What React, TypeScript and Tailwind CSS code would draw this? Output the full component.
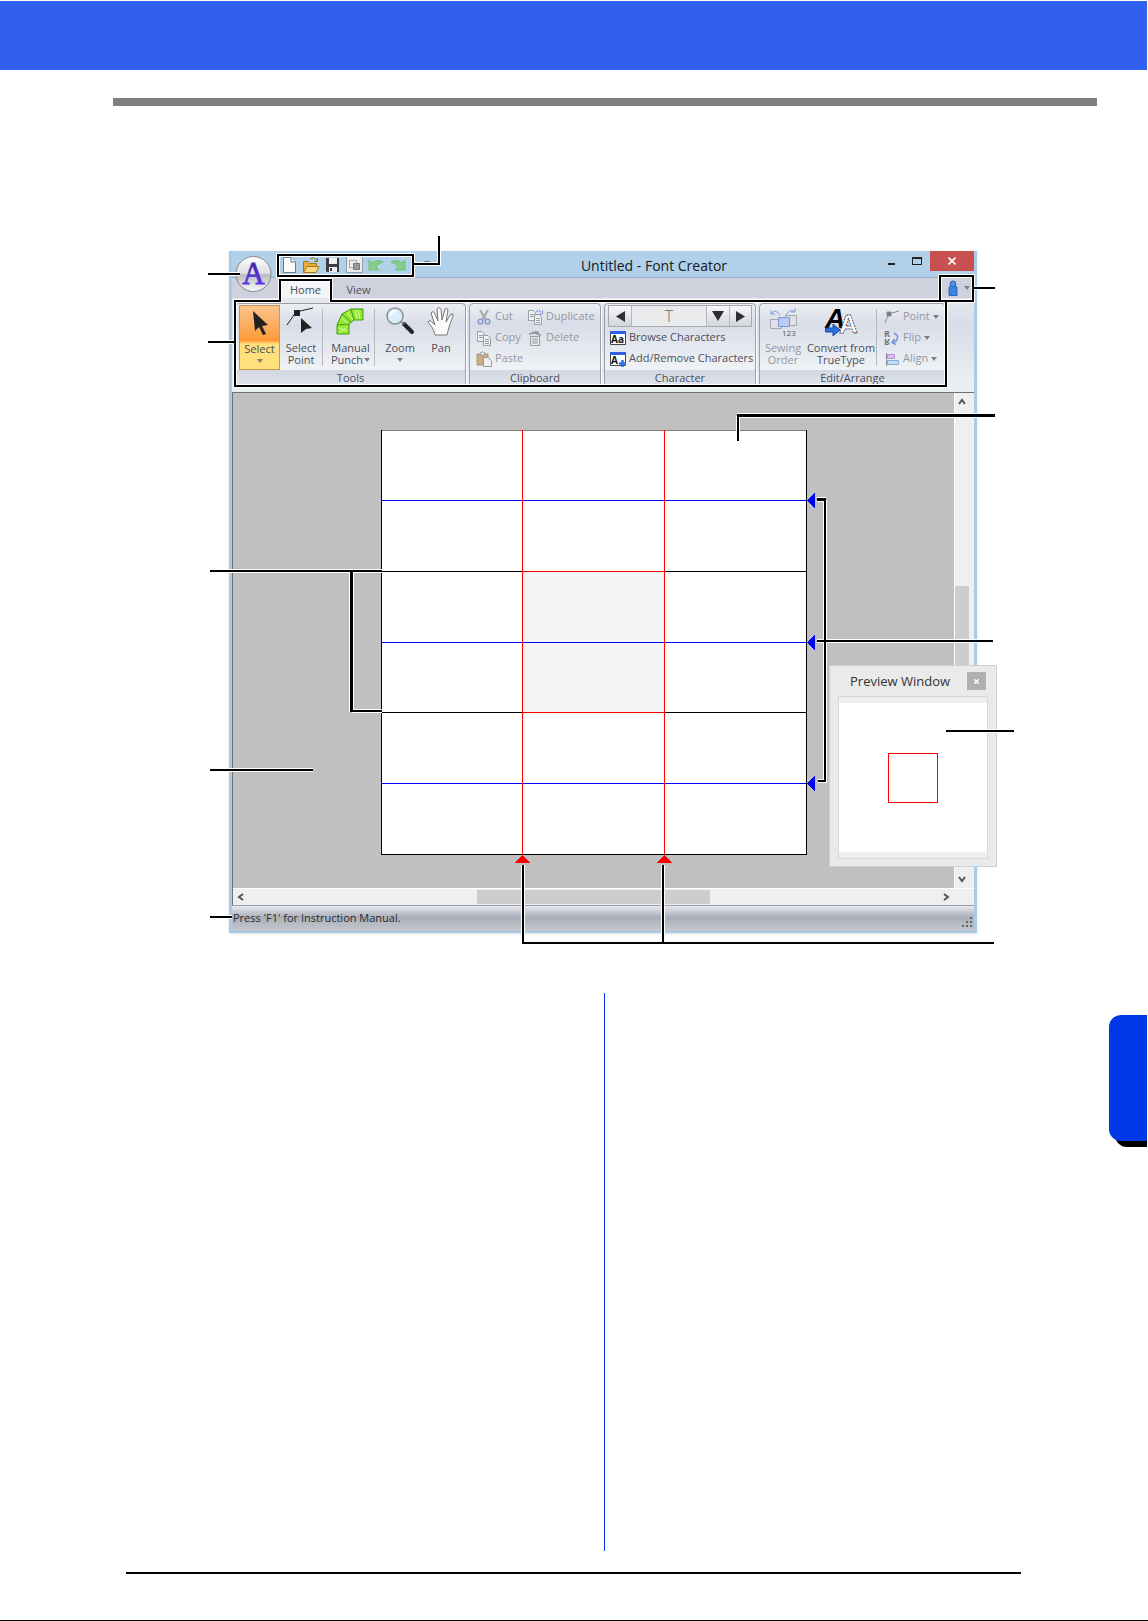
import type { ReactNode } from "react";

const Caret = () => (
  <svg width="6" height="4" viewBox="0 0 6 4" className="shrink-0">
    <path d="M0 0H6L3 4Z" fill="#808080" />
  </svg>
);

const Group = ({ label, className, children }: { label: string; className: string; children: ReactNode }) => (
  <section
    className={`${className} flex shrink-0 flex-col rounded-sm border border-[#9c9fa8] bg-linear-to-b from-[#eceef3] from-0% via-[#d9dde8] via-25% to-[#eff3f5] to-80% shadow-[1px_1px_0_#fff]`}
  >
    <div className="flex h-[66px] pt-px">{children}</div>
    <h2 className="h-4 bg-linear-to-b from-[#d3d7e2] to-[#e0e4ec] text-center leading-4 text-[#4a4e5a]">{label}</h2>
  </section>
);

const BigButton = ({
  className,
  icon,
  lines,
  menu,
}: {
  className: string;
  icon: ReactNode;
  lines: string[];
  menu?: boolean;
}) => (
  <button className={`${className} flex shrink-0 flex-col items-center whitespace-nowrap pt-px leading-3`}>
    <svg width="32" height="32" viewBox="0 0 32 32" className="mb-1 shrink-0 overflow-visible">
      {icon}
    </svg>
    {lines.map((line, i) => (
      <span key={line} className="flex items-center gap-px">
        {line}
        {menu && i === 1 && <Caret />}
      </span>
    ))}
    {menu && lines.length === 1 && (
      <span className="flex h-3 items-center">
        <Caret />
      </span>
    )}
  </button>
);

const SmallButton = ({ icon, label, menu }: { icon: ReactNode; label: string; menu?: boolean }) => (
  <button className="flex h-[21px] items-center gap-[3px] whitespace-nowrap">
    <svg width="16" height="16" viewBox="0 0 16 16" className="shrink-0 overflow-visible">
      {icon}
    </svg>
    {label}
    {menu && <Caret />}
  </button>
);

const Separator = () => <div className="my-1 w-px shrink-0 bg-[#b5b8c2]" />;

/* Small icons, 16x16 */
const pages = (
  <g fill="#eef0f3" stroke="#9a9da4">
    <path d="M1.500 1.500H6L8.500 4V11.500H1.500Z" />
    <path d="M3 5.500H7M3 7.500H7" />
    <path d="M7.500 5.500H12L14.500 8V15.500H7.500Z" />
    <path d="M9 9.500H13M9 11.500H13M9 13.500H13" />
  </g>
);

const icons = {
  cut: (
    <g fill="none">
      <path d="M4 1L10 11M12 1L6 11" stroke="#a6a8ae" strokeWidth="2" />
      <circle cx="4.500" cy="12.500" r="2.300" stroke="#8a9bd2" strokeWidth="1.600" />
      <circle cx="11.500" cy="12.500" r="2.300" stroke="#8a9bd2" strokeWidth="1.600" />
    </g>
  ),
  copy: pages,
  duplicate: (
    <g>
      {pages}
      <path d="M9 3Q11 0 14 3M15.500 1V5H11.500" fill="none" stroke="#7e93d8" />
    </g>
  ),
  paste: (
    <g>
      <path d="M1 3H12V14H1Z" fill="#c8ad85" stroke="#b09872" />
      <path d="M4 4V2H5Q6.500 -1 8 2H9V4Z" fill="#eee" stroke="#999" />
      <path d="M7.500 6.500H12L15.500 9.500V15.500H7.500Z" fill="#f0f1f3" stroke="#999" />
    </g>
  ),
  trash: (
    <g fill="none" stroke="#96989e">
      <path d="M3.500 6.500H12.500V15.500H3.500ZM6 8V14M8 8V14M10 8V14" fill="#eceef0" />
      <path d="M2 4L12 2M5 2L13 5M8 1L14 6" strokeWidth="1.500" />
    </g>
  ),
  browse: (
    <g>
      <path d="M0.500 2.500H15.500V14.500H0.500Z" fill="#fff" stroke="#444" />
      <path d="M0 1H16V4H0Z" fill="#2f60dd" />
      <text x="1" y="13" fontSize="10" fontWeight="700" fill="#111">Aa</text>
    </g>
  ),
  addRemove: (
    <g>
      <path d="M0.500 2.500H15.500V14.500H0.500Z" fill="#fff" stroke="#444" />
      <path d="M0 1H16V4H0Z" fill="#2f60dd" />
      <text x="1" y="13" fontSize="10" fontWeight="700" fill="#111">A</text>
      <path d="M12.500 9V16M9 12.500H16" stroke="#2a6fdf" strokeWidth="2.400" />
    </g>
  ),
  point: (
    <g fill="none" stroke="#8a8c92">
      <path d="M1 14L4.500 5L15 2" />
      <path d="M3 3H7V7H3Z" fill="#777" />
    </g>
  ),
  flip: (
    <g>
      <text x="0" y="7" fontSize="9" fontWeight="700" fill="#777">R</text>
      <text x="0" y="-9" fontSize="9" fontWeight="700" fill="#777" transform="scale(1 -1)">R</text>
      <path d="M10 3Q16 6 12 11L9 12.500M10.500 9L8 12.500L12 14.500" fill="none" stroke="#7d95d8" strokeWidth="1.600" />
    </g>
  ),
  align: (
    <g>
      <path d="M2.500 2V15" stroke="#8d8fa8" />
      <path d="M3.500 3.500H10.500V7.500H3.500Z" fill="#d9c3ea" stroke="#b391cd" />
      <path d="M3.500 9.500H14.500V13.500H3.500Z" fill="#c3dcf2" stroke="#86add8" />
    </g>
  ),
};

/* Quick access icons, 18x18 */
const quickIcons = [
  {
    name: "New",
    icon: (
      <g fill="#fcfcfc" stroke="#77797e">
        <path d="M3.500 1.500H11L15.500 6V16.500H3.500Z" />
        <path d="M11 1.500V6H15.500" />
      </g>
    ),
  },
  {
    name: "Open",
    icon: (
      <g>
        <path d="M1.500 16V5.500H6L8 7.500H14.500V16Z" fill="#e9ac3c" stroke="#a87418" />
        <path d="M1.500 16.500L5 10.500H17L14 16.500Z" fill="#fbd97e" stroke="#a87418" />
        <path d="M8 3Q12 0 15 5M15.500 2V5.500H12" fill="none" stroke="#8f7136" />
      </g>
    ),
  },
  {
    name: "Save",
    icon: (
      <g>
        <path d="M2 2H15V16H3L2 15Z" fill="#3b3d42" />
        <path d="M5 2H13V8H5ZM5 11H13V16H5Z" fill="#eef0f3" />
        <path d="M6 12H8V15H6Z" fill="#3b3d42" />
      </g>
    ),
  },
  {
    name: "Design property",
    icon: (
      <g>
        <path d="M0.500 0.500H16.500V16.500H0.500Z" fill="#ededed" stroke="#9a9da4" />
        <path d="M3.500 4.500H10.500V11.500H3.500Z" fill="none" stroke="#666" strokeDasharray="1 1" />
        <path d="M7.500 7.500H13.500V13.500H7.500Z" fill="#999" stroke="#777" />
      </g>
    ),
  },
  {
    name: "Undo",
    icon: <path d="M1 4V14H11L8 11Q10 7 15 6Q9 3 4 7Z" fill="#86cf8a" stroke="#72bf78" />,
  },
  {
    name: "Redo",
    icon: <path d="M15 4V14H5L8 11Q6 7 1 6Q7 3 12 7Z" fill="#86cf8a" stroke="#72bf78" />,
  },
];

const arrowPointer = "M9 4L24 18L18 19L22 27L19 28L15 20L11 24Z";

const TitleBar = () => (
  <header className="flex h-[27px] shrink-0 border-b border-[#93b1cd] pl-[46px]">
    <div className="flex pt-px">
      {quickIcons.map(({ name, icon }) => (
        <button key={name} aria-label={name} className="flex w-[22px] items-center justify-center">
          <svg width="18" height="18" viewBox="0 0 18 18">
            {icon}
          </svg>
        </button>
      ))}
    </div>
    <button aria-label="Customize" className="flex w-5 justify-end pt-2.5">
      <span className="h-px w-1.5 bg-[#777]" />
    </button>
    <h1 className="flex-1 pt-px text-center text-sm leading-7 text-[#16191d]">Untitled - Font Creator</h1>
    <button aria-label="Minimize" className="flex w-[26px] justify-center pt-3">
      <span className="h-0.5 w-[7px] bg-[#222]" />
    </button>
    <button aria-label="Maximize" className="flex w-[26px] justify-center pt-1.5">
      <span className="h-2 w-2.5 border border-t-2 border-[#222]" />
    </button>
    <button aria-label="Close" className="flex h-5 w-11 items-center justify-center bg-[#c75050]">
      <svg width="8" height="8" viewBox="0 0 8 8">
        <path d="M0.500 0.500L7.500 7.500M7.500 0.500L0.500 7.500" stroke="#fff" strokeWidth="1.600" />
      </svg>
    </button>
  </header>
);

const Tabs = () => (
  <nav className="flex h-5 shrink-0 bg-[#cfd2dc] pl-12 text-[#4a4e5a]">
    <a href="#home" className="w-[51px] rounded-t-sm bg-[#f3f5f8] text-center leading-6">
      Home
    </a>
    <a href="#view" className="w-[55px] text-center leading-6">
      View
    </a>
    <button aria-label="Help" className="ml-auto flex w-[30px] items-center justify-center gap-1.5">
      <svg width="10" height="16" viewBox="0 0 10 16">
        <path d="M1 8Q1 6 3 6H7Q9 6 9 8V15.500H1Z" fill="#3b84dc" stroke="#2868b8" />
        <circle cx="5" cy="4" r="3" fill="#4a93e6" stroke="#2868b8" />
      </svg>
      <Caret />
    </button>
  </nav>
);

const Ribbon = () => (
  <div className="flex h-[94px] shrink-0 bg-linear-to-b from-[#e6e9ef] from-0% via-[#d8dce7] via-30% to-[#e8f0f2] to-90% py-[5px] pl-[3px] text-[#4a4e5a]">
    <Group label="Tools" className="w-[231px] mr-[3px]">
      <BigButton
        className="ml-[3px] w-[41px] border border-[#c79a4e] bg-linear-to-b from-[#fbc48c] from-0% via-[#fb9a32] via-55% to-[#ffe07a] to-60%"
        icon={<path d={arrowPointer} fill="#222" />}
        lines={["Select"]}
        menu
      />
      <BigButton
        className="w-[42px]"
        icon={
          <g>
            <path d="M2 19L11 6L28 2" fill="none" stroke="#222" />
            <path d="M9 4H15V10H9Z" fill="#222" />
            <path d="M16 12L27 22L21 23L16 27Z" fill="#222" />
          </g>
        }
        lines={["Select", "Point"]}
      />
      <Separator />
      <BigButton
        className="w-[51px] pl-1"
        icon={
          <g fill="#96e632" stroke="#35a010">
            <path d="M2 28V19L7 8L16 3H28V14H19L14 18V28Z" />
            <path d="M2 19L14 18M7 8L16 16M16 3L19 14" />
            <path d="M4 27L12 21M4 22L12 25M7 12L13 18M12 6L18 14M20 4L22 13M23 4L25 13" stroke="#d6ffa0" />
          </g>
        }
        lines={["Manual", "Punch"]}
        menu
      />
      <Separator />
      <BigButton
        className="w-[50px]"
        icon={
          <g>
            <path d="M20 18L28 26" stroke="#222" strokeWidth="4" strokeLinecap="round" />
            <path d="M16 15L20 18" stroke="#888" strokeWidth="2" />
            <circle cx="11" cy="10" r="8" fill="#d9eefb" stroke="#8b9096" strokeWidth="1.500" />
            <path d="M6 10Q7 5 12 5" fill="none" stroke="#fff" strokeWidth="2" />
          </g>
        }
        lines={["Zoom"]}
        menu
      />
      <BigButton
        className="w-8"
        icon={
          <path
            d="M10 29C9 23 6 20 3 16Q4 13 8 17L10 19L6 7Q8 4 10 8L13 15L12 3Q14 0 16 3L17 14L20 3Q22 1 23 4L21 16L26 8Q29 7 28 10L24 21Q23 25 22 29Z"
            fill="#fbfbfb"
            stroke="#777"
          />
        }
        lines={["Pan"]}
      />
    </Group>

    <Group label="Clipboard" className="w-[132px] mr-[3px]">
      <div className="flex gap-1 pt-px pl-1.5 text-[#94979f]">
        <div>
          <SmallButton icon={icons.cut} label="Cut" />
          <SmallButton icon={icons.copy} label="Copy" />
          <SmallButton icon={icons.paste} label="Paste" />
        </div>
        <div>
          <SmallButton icon={icons.duplicate} label="Duplicate" />
          <SmallButton icon={icons.trash} label="Delete" />
        </div>
      </div>
    </Group>

    <Group label="Character" className="w-[152px] mr-[3px]">
      <div className="min-w-0 flex-1 px-[3px]">
        <div className="flex h-[22px] border border-[#a5a8ae] bg-linear-to-b from-[#f8f8f9] to-[#d4d6db]">
          <button aria-label="Previous character" className="flex w-[22px] shrink-0 items-center justify-center">
            <svg width="9" height="11" viewBox="0 0 9 11">
              <path d="M9 0V11L0 5.500Z" fill="#2b2e33" />
            </svg>
          </button>
          <input
            aria-label="Character"
            defaultValue="T"
            className="w-full min-w-0 border-x border-[#b5b7bc] bg-[#e9eaec] text-center text-base font-light text-[#666]"
          />
          <button aria-label="Character list" className="flex w-[22px] shrink-0 items-center justify-center">
            <svg width="12" height="10" viewBox="0 0 12 10">
              <path d="M0 0H12L6 10Z" fill="#2b2e33" />
            </svg>
          </button>
          <button
            aria-label="Next character"
            className="flex w-[22px] shrink-0 items-center justify-center border-l border-[#b5b7bc]"
          >
            <svg width="9" height="11" viewBox="0 0 9 11">
              <path d="M0 0V11L9 5.500Z" fill="#2b2e33" />
            </svg>
          </button>
        </div>
        <div className="pl-0.5">
          <SmallButton icon={icons.browse} label="Browse Characters" />
          <SmallButton icon={icons.addRemove} label="Add/Remove Characters" />
        </div>
      </div>
    </Group>

    <Group label="Edit/Arrange" className="w-[187px]">
      <BigButton
        className="w-[46px] text-[#94979f]"
        icon={
          <g>
            <path d="M4 8Q8 2 13 9M4 4V8H8M19 9Q23 2 28 6M28 2V6H24" fill="none" stroke="#7b9de0" />
            <path d="M3.500 13.500H14.500V22.500H3.500Z" fill="#dfe1e5" stroke="#a5a7ae" />
            <path d="M18.500 9.500H29.500V19.500H18.500Z" fill="#dfe1e5" stroke="#a5a7ae" />
            <path d="M11.500 11.500H22.500V20.500H11.500Z" fill="#b9cbf8" stroke="#8095d4" />
            <text x="15" y="30" fontSize="8" fill="#555">123</text>
          </g>
        }
        lines={["Sewing", "Order"]}
      />
      <BigButton
        className="w-[70px]"
        icon={
          <g fontFamily="Liberation Sans, sans-serif" fontWeight="700">
            <text x="0" y="22" fontSize="28" fontStyle="italic" fill="#000">A</text>
            <text x="14" y="27" fontSize="26" fill="#fff" stroke="#333" strokeWidth="0.800" strokeDasharray="2 1">A</text>
            <path d="M0.500 22H8V18L15 24L8 30V26H0.500Z" fill="#2a6fdf" stroke="#17489f" />
          </g>
        }
        lines={["Convert from", "TrueType"]}
      />
      <Separator />
      <div className="pt-px pl-[7px] text-[#94979f]">
        <SmallButton icon={icons.point} label="Point" menu />
        <SmallButton icon={icons.flip} label="Flip" menu />
        <SmallButton icon={icons.align} label="Align" menu />
      </div>
    </Group>
  </div>
);

/* Drawing frame with base, cap and width guide lines */
const DesignPage = () => (
  <svg width="426" height="425" viewBox="0 0 426 425" className="shrink-0 overflow-visible" shapeRendering="crispEdges">
    <path d="M0 0H426V425H0Z" fill="#fff" />
    <path d="M141 141H283V282H141Z" fill="#f4f4f4" />
    <path d="M0 0.500H426" stroke="#808080" />
    <path d="M0.500 0V425M425.500 0V425M0 424.500H426M0 141.500H426M0 282.500H426" stroke="#000" />
    <path d="M1 70.500H425M1 212.500H425M1 353.500H425" stroke="#00f" />
    <path d="M141.500 0V424M283.500 0V424M141 141.500H284M141 282.500H284" stroke="#f00" />
    <path d="M426 70.500L434 62.500V78.500ZM426 212.500L434 204.500V220.500ZM426 353.500L434 345.500V361.500Z" fill="#00f" />
    <path d="M141.500 425L149.500 433H133.500ZM283.500 425L291.500 433H275.500Z" fill="#f00" />
  </svg>
);

const Chevron = ({ d }: { d: string }) => (
  <svg width="8" height="8" viewBox="0 0 8 8" className="shrink-0">
    <path d={d} fill="none" stroke="#555" strokeWidth="2" />
  </svg>
);

const Workspace = () => (
  <div className="border-t border-l border-[#707070] bg-[#efefef] pb-px">
    <div className="flex">
      <div className="flex h-[495px] flex-1 items-start justify-center bg-[#c0c0c0] pt-[37px]">
        <DesignPage />
      </div>
      <div className="flex w-5 flex-col items-center border-l border-white pt-[5px] pr-[5px] pb-[5px]">
        <Chevron d="M1 6L4 2L7 6" />
        <div className="mt-[180px] w-3.5 flex-1 bg-[#cdcdcd]" />
        <div className="h-[120px]" />
        <Chevron d="M1 2L4 6L7 2" />
      </div>
    </div>
    <div className="flex h-4 items-center border-t border-white pr-6 pl-1">
      <Chevron d="M6 1L2 4L6 7" />
      <div className="flex h-3.5 flex-1 justify-center">
        <div className="w-[233px] bg-[#cdcdcd]" />
      </div>
      <Chevron d="M2 1L6 4L2 7" />
    </div>
  </div>
);

const StatusBar = () => (
  <footer className="flex h-[26px] shrink-0 items-center justify-between border-t border-[#9c9fac] bg-linear-to-b from-[#e8e9ef] from-0% via-[#a9aeb9] via-45% to-[#c6c8ce] to-100% pl-px text-[#2a2c30]">
    <p>Press 'F1' for Instruction Manual.</p>
    <svg width="12" height="12" viewBox="0 0 12 12" className="mt-2">
      <path d="M8 0H10V2H8ZM4 4H6V6H4ZM8 4H10V6H8ZM0 8H2V10H0ZM4 8H6V10H4ZM8 8H10V10H8Z" fill="#666" />
    </svg>
  </footer>
);

const PreviewWindow = () => (
  <aside className="absolute top-[414px] -right-[23px] w-[168px] border border-[#d0d0d0] bg-[#eaeaea] px-2 pt-1.5 pb-[7px]">
    <div className="mb-1.5 flex h-[18px] items-center pr-0.5">
      <h2 className="flex-1 pl-3 text-[13px] leading-4 whitespace-nowrap text-[#333]">Preview Window</h2>
      <button aria-label="Close preview" className="flex h-[18px] w-[19px] items-center justify-center bg-[#b0b0b0]">
        <svg width="5" height="5" viewBox="0 0 5 5">
          <path d="M0 0L5 5M5 0L0 5" stroke="#fff" strokeWidth="1.300" />
        </svg>
      </button>
    </div>
    <div className="flex h-[163px] items-center justify-center border border-y-[7px] border-[#efefef] bg-white outline outline-[#d8d8d8] -outline-offset-1">
      <div className="h-[50px] w-[50px] border border-[#f00]" />
    </div>
  </aside>
);

const calloutPath = [
  "M439 236V264H413",
  "M278 255H413V276H278Z",
  "M208 274H240",
  "M208 342H234",
  "M235 301H280V280H331V301H946V386H235Z",
  "M940 276H973V301H940ZM973 288H995",
  "M738 441V416",
  "M210 571H382M352 711H382",
  "M210 770H313",
  "M210 917H232",
  "M523 865V943H994M663 865V943",
  "M825 500V781H818M817 641H993",
  "M946 731H1014",
].join("");

const heavyCalloutPath = "M737 415.500H995M351.500 571V712M817 499.500H826";

const Callouts = () => (
  <svg
    className="pointer-events-none absolute inset-0 h-full w-full"
    viewBox="0 106 1148 860"
    preserveAspectRatio="none"
    fill="none"
    shapeRendering="crispEdges"
  >
    <path d={calloutPath} stroke="#fff" strokeWidth="4" />
    <path d={heavyCalloutPath} stroke="#fff" strokeWidth="5" />
    <path d={calloutPath} stroke="#000" strokeWidth="2" />
    <path d={heavyCalloutPath} stroke="#000" strokeWidth="3" />
  </svg>
);

const App = () => {
  return (
    <main className="flex min-h-screen flex-col bg-white pt-px font-['Open_Sans','Noto_Sans',sans-serif] text-[11px]">
      <div className="mr-px h-[69px] bg-[#3260ee]" />
      <div className="mt-7 mr-[51px] ml-[113px] h-2 bg-[#808080]" />

      {/* Font Creator window */}
      <figure className="relative pt-[145px] pr-[171px] pb-[33px] pl-[229px]">
        <div className="relative flex flex-col border-x-[3px] border-b-2 border-[#aacbe6] bg-[#b1d0ea] shadow-sm">
          <TitleBar />
          <Tabs />
          <Ribbon />
          <Workspace />
          <StatusBar />
          <button aria-label="Application menu" className="absolute top-1 left-[3px]">
            <svg width="38" height="38" viewBox="0 0 38 38">
              <defs>
                <linearGradient id="orb" x1="0" y1="0" x2="0" y2="1">
                  <stop offset="0" stopColor="#fff" />
                  <stop offset="0.480" stopColor="#dfdfe2" />
                  <stop offset="0.520" stopColor="#b9bbc0" />
                  <stop offset="1" stopColor="#fafafa" />
                </linearGradient>
                <linearGradient id="letter" x1="0" y1="0" x2="0" y2="1">
                  <stop offset="0" stopColor="#3a20a0" />
                  <stop offset="1" stopColor="#6a3cf4" />
                </linearGradient>
              </defs>
              <circle cx="18.500" cy="19" r="17.500" fill="url(#orb)" stroke="#85878c" />
              <text
                x="18.500"
                y="29"
                textAnchor="middle"
                fontFamily="Liberation Serif, serif"
                fontSize="31"
                fill="url(#letter)"
                stroke="url(#letter)"
                strokeWidth="0.800"
              >
                A
              </text>
            </svg>
          </button>
          <PreviewWindow />
        </div>
        <Callouts />
      </figure>

      {/* Text columns */}
      <div className="mt-[27px] flex h-[558px]">
        <div className="w-[calc(50%+31px)] border-r border-[#0038e8]" />
        <div className="flex flex-1 items-start justify-end pt-[22px] pr-px">
          <div className="h-[126px] w-[38px] rounded-l-xl bg-[#0038e8] shadow-[6px_6px_0_#000] [clip-path:inset(0_0_-6px_0)]" />
        </div>
      </div>

      <div className="mt-[21px] mr-[127px] ml-[126px] h-0.5 bg-black" />
      <div className="mt-auto h-px bg-black" />
    </main>
  );
};

export default App;
